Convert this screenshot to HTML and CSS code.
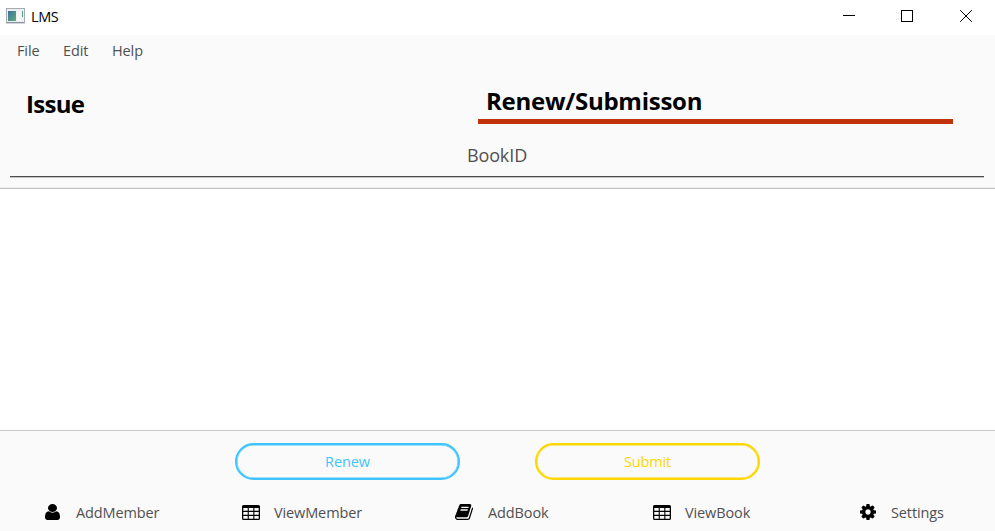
FILE: index.html
```html
<!DOCTYPE html>
<html lang="en">
<head>
<meta charset="utf-8">
<title>LMS</title>
<link rel="stylesheet" href="styles.css">
</head>
<body>
<div class="window">
  <header class="titlebar">
    <svg class="app-icon" width="19" height="16" viewBox="0 0 19 16">
      <defs><linearGradient id="g" x1="0" y1="0" x2="1" y2="1"><stop offset="0" stop-color="#3d6f9c"/><stop offset="1" stop-color="#5fae7c"/></linearGradient></defs>
      <rect x=".5" y=".5" width="18" height="14.5" fill="#eceeef" stroke="#a5abb3"/>
      <rect x="1" y="14" width="17" height="1" fill="#8d949b"/>
      <rect x="2" y="3" width="8" height="10" fill="url(#g)"/>
      <rect x="11" y="3" width="4" height="10" fill="#f6f6f6"/>
      <rect x="16" y="3" width="1" height="6" fill="#56a08a"/>
    </svg>
    <span class="title">LMS</span>
    <svg class="controls" width="129" height="12" viewBox="0 0 129 12" fill="none" stroke="#000">
      <path d="M0 5.5h12M58.500 .5h11v11h-11z" shape-rendering="crispEdges"/>
      <path d="M117.200 .2l11.600 11.600M128.800 .2l-11.600 11.600"/>
    </svg>
  </header>
  <nav class="menubar"><span>File</span><span>Edit</span><span>Help</span></nav>
  <section class="tabs">
    <h1 class="issue"><span>Issue</span></h1>
    <h1 class="renewal"><span>Renew/Submisson</span></h1>
  </section>
  <div class="field"><span>BookID</span></div>
  <main class="list"></main>
  <section class="actions">
    <button class="renew"><span>Renew</span></button>
    <button class="submit"><span>Submit</span></button>
  </section>
  <footer class="toolbar">
    <div class="tool"><svg class="user" viewBox="0 128 1280 1536" preserveAspectRatio="none"><path d="M1280 1399q0 109-62.500 187t-150.500 78h-854q-88 0-150.500-78t-62.500-187q0-85 8.500-160.500t31.500-152 58.500-131 94-89 134.500-34.500q131 128 313 128t313-128q76 0 134.500 34.500t94 89 58.500 131 31.500 152 8.500 160.500zm-256-887q0 159-112.500 271.500t-271.500 112.500-271.500-112.500-112.500-271.500 112.500-271.500 271.500-112.500 271.500 112.500 112.500 271.500z"/></svg><span>AddMember</span></div>
    <div class="tool"><svg class="table" viewBox="0 0 18 15"><path fill-rule="evenodd" d="M1.500 0h15Q18 0 18 1.500v12Q18 15 16.500 15h-15Q0 15 0 13.500v-12Q0 0 1.500 0zM1.300 3v2.700h4.400V3zm5.500 0v2.700h4.500V3zm5.600 0v2.700h4.300V3zM1.300 7v2.700h4.400V7zm5.500 0v2.700h4.500V7zm5.600 0v2.700h4.300V7zM1.300 11v2.700h4.400V11zm5.500 0v2.700h4.500V11zm5.600 0v2.700h4.300V11z"/></svg><span>ViewMember</span></div>
    <div class="tool"><svg class="book" viewBox="64 128 1664 1536" preserveAspectRatio="none"><path d="M1703 478q40 57 18 129l-275 906q-19 64-76.500 107.500t-122.500 43.500h-923q-77 0-148.500-53.500t-99.500-131.500q-24-67-2-127 0-4 3-27t4-37q1-8-3-21.500t-3-19.500q2-11 8-21t16.500-23.500 16.500-23.500q23-38 45-91.500t30-91.500q3-10 .5-30t-.5-28q3-11 17-28t17-23q21-36 42-92t25-90q1-9-2.500-32t.5-28q4-13 22-30.500t22-22.500q19-26 42.500-84.500t27.500-96.500q1-8-3-25.500t-2-26.500q2-8 9-18t18-23 17-21q8-12 16.500-30.500t15-35 16-36 19.500-32 26.500-23.500 36-11.500 47.500 5.500l-1 3q38-9 51-9h761q74 0 114 56t18 130l-274 906q-36 119-71.500 153.500t-128.500 34.500h-869q-27 0-38 15-11 16-1 43 24 70 144 70h923q29 0 56-15.500t35-41.500l300-987q7-22 5-57 38 15 59 43zm-1064 2q-4 13 2 22.500t20 9.500h608q13 0 25.500-9.500t16.500-22.500l21-64q4-13-2-22.500t-20-9.500h-608q-13 0-25.500 9.500t-16.500 22.500zm-83 256q-4 13 2 22.500t20 9.500h608q13 0 25.500-9.500t16.500-22.500l21-64q4-13-2-22.500t-20-9.500h-608q-13 0-25.500 9.500t-16.500 22.500z"/></svg><span>AddBook</span></div>
    <div class="tool"><svg class="table" viewBox="0 0 18 15"><path fill-rule="evenodd" d="M1.500 0h15Q18 0 18 1.500v12Q18 15 16.500 15h-15Q0 15 0 13.500v-12Q0 0 1.500 0zM1.300 3v2.700h4.400V3zm5.500 0v2.700h4.500V3zm5.600 0v2.700h4.300V3zM1.300 7v2.700h4.400V7zm5.500 0v2.700h4.500V7zm5.600 0v2.700h4.300V7zM1.300 11v2.700h4.400V11zm5.500 0v2.700h4.500V11zm5.600 0v2.700h4.300V11z"/></svg><span>ViewBook</span></div>
    <div class="tool"><svg class="cog" viewBox="128 128 1536 1536"><path d="M1152 896q0-106-75-181t-181-75-181 75-75 181 75 181 181 75 181-75 75-181zm512-109v222q0 12-8 23t-20 13l-185 28q-19 54-39 91 35 50 107 138 10 12 10 25t-9 23q-27 37-99 108t-94 71q-12 0-26-9l-138-108q-44 23-91 38-16 136-29 186-7 28-36 28h-222q-14 0-24.500-8.500t-11.500-21.500l-28-184q-49-16-90-37l-141 107q-10 9-25 9-14 0-25-11-126-114-165-168-7-10-7-23 0-12 8-23 15-21 51-66.500t54-70.500q-27-50-41-99l-183-27q-13-2-21-12.500t-8-23.500v-222q0-12 8-23t19-13l186-28q14-46 39-92-40-57-107-138-10-12-10-24 0-10 9-23 26-36 98.500-107.500t94.500-71.500q13 0 26 10l138 107q44-23 91-38 16-136 29-186 7-28 36-28h222q14 0 24.500 8.500t11.500 21.500l28 184q49 16 90 37l142-107q9-9 24-9 13 0 25 10 129 119 165 170 7 8 7 22 0 12-8 23-15 21-51 66.500t-54 70.500q26 50 41 98l183 28q13 2 21 12.500t8 23.500z"/></svg><span>Settings</span></div>
  </footer>
</div>
</body>
</html>
```
FILE: styles.css
```css
* { box-sizing: border-box; }
body { margin: 0; font-family: "Open Sans", "Noto Sans", sans-serif; font-size: 14.5px; letter-spacing: -0.12px; color: #505050; }
.window { width: 995px; height: 531px; display: flex; flex-direction: column; background: #fafafa; overflow: hidden; }
span { white-space: nowrap; }

.titlebar { height: 35px; background: #fff; display: flex; align-items: flex-start; padding: 8px 23px 0 6px; color: #000; }
.title { margin: 0 auto 0 6px; line-height: 18px; letter-spacing: -0.4px; }
.controls { margin-top: 2px; }

.menubar { height: 33px; display: grid; grid-template-columns: 46px 49px 60px; padding-left: 17px; line-height: 31px; }

.tabs { height: 61px; display: flex; color: #000; }
.tabs h1 { margin: 0; font-size: 24px; font-weight: 700; line-height: 34px; letter-spacing: -0.25px; }
.tabs .issue { width: 478px; padding: 19px 0 0 26px; letter-spacing: -0.7px; }
.renewal { width: 475px; height: 56px; padding: 16px 0 0 8px; border-bottom: 5px solid #c0330a; }

.field { height: 48px; margin: 0 11px 0 10px; padding-top: 13px; line-height: 26px; font-size: 18px; text-align: center; border-bottom: 1px solid #4d4d4d; box-shadow: 0 1px 0 #c4c4c4; letter-spacing: -0.1px; }

.list { margin-top: 11px; height: 244px; background: #fff; border-top: 1px solid #c4c4c4; border-bottom: 1px solid #c8c8c8; box-shadow: 0 -1px 0 #eee; }

.actions { height: 64px; display: flex; gap: 75px; padding: 12px 0 0 235px; }
.actions button { width: 225px; height: 37px; border: 2px solid; border-radius: 18.5px; box-shadow: inset 0 0 0 0.5px currentColor; background: transparent; font: inherit; letter-spacing: inherit; line-height: 20px; padding: 1px 0 0; }
.actions .renew { border-color: #40c4ff; color: #40c4ff; }
.actions .submit { border-color: #ffd600; color: #ffd600; }

.toolbar { height: 36px; display: grid; grid-template-columns: 197px 213px 198px 207px 100px; padding-left: 45px; }
.tool { display: flex; align-items: center; height: 34px; }
.tool svg { fill: #000; flex: none; }
.user { width: 15px; height: 16px; margin-right: 16px; }
.table { width: 18px; height: 15px; margin-right: 14px; }
.book { width: 18px; height: 16px; margin-right: 15px; }
.cog { width: 16px; height: 16px; margin-right: 15px; }
```
